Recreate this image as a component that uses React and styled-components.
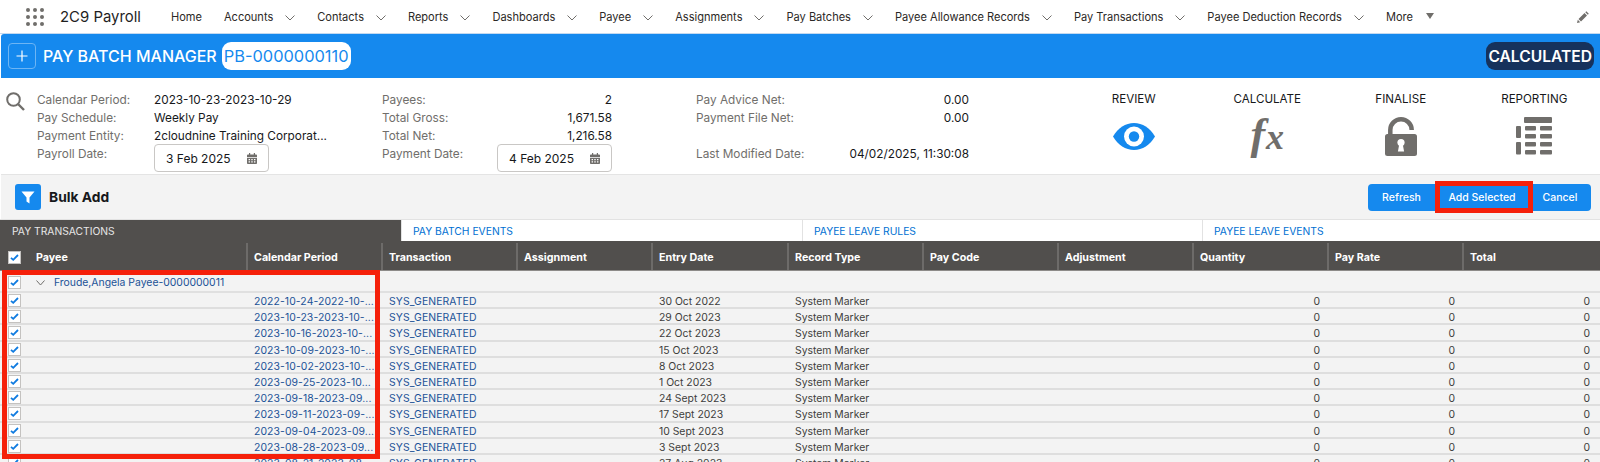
import React from "react";
import styled, { createGlobalStyle } from "styled-components";

const GlobalStyle = createGlobalStyle`
  html, body {
    margin: 0;
    padding: 0;
    height: 462px;
    overflow: hidden;
    background: #ffffff;
    font-family: Inter, "Liberation Sans", sans-serif;
    color: #16181b;
  }
  * { box-sizing: border-box; }
`;

const NavBar = styled.nav`
  height: 34px;
  display: flex;
  align-items: center;
  padding-left: 26px;
  background: #fff;
  border-bottom: 1px solid #c3d9f0;
`;

const AppGrid = styled.div`
  width: 18px;
  height: 18px;
  display: grid;
  grid-template-columns: repeat(3, 4px);
  grid-template-rows: repeat(3, 4px);
  justify-content: space-between;
  align-content: space-between;
  margin-right: 16px;
`;

const AppDot = styled.span`
  border-radius: 50%;
  background: #706e6b;
`;

const AppName = styled.div`
  font-size: 14.9px;
  width: 111px;
  white-space: nowrap;
  color: #1f1f1f;
`;

const NavItem = styled.div`
  display: flex;
  align-items: center;
  font-size: 11.05px;
  color: #2b2826;
  white-space: nowrap;
  margin-right: ${({ $gap }) => $gap}px;
`;

const NavChevron = styled.svg`
  width: 10px;
  height: 6px;
  margin-left: 12px;
  margin-top: 2px;
`;

const NavCaret = styled.span`
  width: 0;
  height: 0;
  margin-left: 13px;
  margin-bottom: 2px;
  border-left: 4.5px solid transparent;
  border-right: 4.5px solid transparent;
  border-top: 6px solid #706e6b;
`;

const PencilWrap = styled.div`
  margin-left: auto;
  margin-right: 11px;
  display: flex;
`;

const HeaderBar = styled.header`
  height: 44px;
  display: flex;
  align-items: center;
  padding: 0 6px 0 7px;
  background: #1589ee;
  border-radius: 3px 0 0 0;
  margin-left: 1px;
`;

const PlusButton = styled.div`
  width: 28px;
  height: 26px;
  display: flex;
  align-items: center;
  justify-content: center;
  margin-right: 7px;
  border: 1px solid #6db5f4;
  border-radius: 4px;
`;

const HeaderTitle = styled.div`
  font-size: 16px;
  font-weight: 500;
  color: #fff;
  margin-right: 5px;
  white-space: nowrap;
`;

const RecordChip = styled.div`
  height: 28px;
  padding: 0 2px;
  display: flex;
  align-items: center;
  border-radius: 9px;
  background: #fff;
  color: #1589ee;
  font-size: 16.4px;
  white-space: nowrap;
`;

const StatusChip = styled.div`
  height: 28px;
  margin-left: auto;
  padding: 0 2px;
  display: flex;
  align-items: center;
  border-radius: 9px;
  background: #16325c;
  color: #fff;
  font-size: 15.6px;
  font-weight: 600;
`;

const InfoPanel = styled.section`
  height: 97px;
  display: flex;
  background: #fff;
  border-bottom: 1px solid #e4e4e4;
  margin-left: 1px;
`;

const SearchSlot = styled.div`
  width: 36px;
  padding: 14px 0 0 5px;
`;

const InfoColumn = styled.div`
  width: ${({ $width }) => $width}px;
  margin-right: ${({ $after }) => $after}px;
  padding-top: 13px;
`;

const InfoRow = styled.div`
  height: ${({ $height }) => $height || 18}px;
  display: flex;
  align-items: ${({ $top }) => ($top ? "flex-start" : "center")};
  justify-content: space-between;
  font-size: 11.8px;
  white-space: nowrap;
`;

const InfoLabel = styled.span`
  color: #706e6b;
  ${({ $top }) => $top && "margin-top: 2px;"}
`;

const InfoValue = styled.span`
  color: #16181b;
  ${({ $left }) => $left && "width: 170px;"}
`;

const DateSlot = styled.div`
  width: ${({ $width }) => $width}px;
`;

const DateBox = styled.div`
  width: 115px;
  height: 28px;
  margin-top: -1px;
  display: flex;
  align-items: center;
  justify-content: space-between;
  padding: 0 11px;
  border: 1px solid #c9c7c5;
  border-radius: 4px;
  background: #fff;
  font-size: 12px;
  color: #16181b;
`;

const ActionList = styled.div`
  margin-left: auto;
  margin-right: -1px;
  display: grid;
  grid-template-columns: repeat(4, 133.5px);
`;

const ActionItem = styled.div`
  display: flex;
  flex-direction: column;
  align-items: center;
  padding-top: 14px;
  font-size: 11.6px;
  color: #16181b;
`;

const ActionIconSlot = styled.div`
  height: 40px;
  margin-top: 10px;
  display: flex;
  align-items: center;
  justify-content: center;
`;

const FxMark = styled.span`
  display: flex;
  align-items: baseline;
  font-family: "Liberation Serif", serif;
  font-style: italic;
  font-weight: 700;
  line-height: 38px;
  color: #706e6b;
`;

const FxLetter = styled.span`
  font-size: ${({ $size }) => $size}px;
  margin-left: ${({ $shift }) => $shift || 0}px;
`;

const Toolbar = styled.div`
  height: 44px;
  display: flex;
  align-items: center;
  padding: 0 9px 0 14px;
  background: #f3f3f3;
  margin-left: 1px;
`;

const FilterTile = styled.div`
  width: 26px;
  height: 26px;
  display: flex;
  align-items: center;
  justify-content: center;
  margin-right: 8px;
  border-radius: 3px;
  background: #1589ee;
`;

const ToolbarTitle = styled.div`
  font-size: 13.8px;
  font-weight: 700;
  color: #16181b;
`;

const ButtonGroup = styled.div`
  position: relative;
  margin-left: auto;
  display: flex;
`;

const ActionButton = styled.button`
  height: 27px;
  padding: 0;
  width: ${({ $width }) => $width}px;
  border: 0;
  background: #1589ee;
  color: #fff;
  font-family: inherit;
  font-size: 10.5px;
  font-weight: 500;
  border-radius: ${({ $round }) =>
    $round === "left" ? "4px 0 0 4px" : $round === "right" ? "0 4px 4px 0" : "0"};
`;

const Callout = styled.div`
  position: absolute;
  border: 5px solid #f5200a;
  pointer-events: none;
  z-index: 5;
  top: ${({ $top }) => $top}px;
  left: ${({ $left }) => $left}px;
  width: ${({ $width }) => $width}px;
  height: ${({ $height }) => $height}px;
`;

const TabStrip = styled.div`
  height: 22px;
  display: flex;
  background: #fff;
  border-top: 1px solid #e2e2e2;
`;

const Tab = styled.div`
  width: ${({ $width }) => $width}px;
  display: flex;
  align-items: center;
  padding-left: ${({ $active }) => ($active ? 12 : 11)}px;
  font-size: 10.3px;
  white-space: nowrap;
  background: ${({ $active }) => ($active ? "#514f4d" : "#fff")};
  color: ${({ $active }) => ($active ? "#e6e6e6" : "#0070d2")};
  border-left: ${({ $active }) => ($active ? "0" : "1px solid #e2e2e2")};
`;

const TableArea = styled.div`
  position: relative;
  background: #f3f3f3;
`;

const gridColumns = "246px 135px 135px 135px 136px 135px 135px 135px 135px 135px 138px";

const HeadRow = styled.div`
  height: 30px;
  display: grid;
  grid-template-columns: ${gridColumns};
  background: #514f4d;
  border-bottom: 1px solid #8d8b89;
`;

const HeadCell = styled.div`
  display: flex;
  align-items: center;
  padding: 1px 0 0 ${({ $first }) => ($first ? 8 : 6)}px;
  margin-top: 2px;
  font-size: 10.7px;
  font-weight: 700;
  color: #fff;
  white-space: nowrap;
  border-left: ${({ $first }) => ($first ? "0" : "2px solid #6d6b69")};
`;

const BoxMark = styled.span`
  flex: none;
  width: 13px;
  height: 13px;
  display: flex;
  align-items: center;
  justify-content: center;
  background: #fff;
  border: 1px solid #c4c2c0;
  margin-right: ${({ $after }) => $after || 0}px;
`;

const GroupRow = styled.div`
  height: 22px;
  display: flex;
  align-items: center;
  padding: 3px 0 0 8px;
  background: #f3f3f3;
  border-bottom: 2px solid #e0e0e0;
  font-size: 10.4px;
  color: #1b5297;
`;

const GroupChevron = styled.svg`
  width: 9px;
  height: 6px;
  margin: 0 9px 0 15px;
`;

const DataRow = styled.div`
  height: 16.2px;
  display: grid;
  grid-template-columns: ${gridColumns};
  border-bottom: 2px solid #dedede;
  font-size: 10.4px;
  line-height: 18px;
  white-space: nowrap;
`;

const CheckCell = styled.div`
  display: flex;
  align-items: flex-start;
  padding: 1px 0 0 8px;
`;

const LinkCell = styled.div`
  padding-left: 8px;
  color: #1b5297;
  letter-spacing: 0.1px;
`;

const TextCell = styled.div`
  padding-left: 8px;
  color: #3e3e3c;
`;

const NumberCell = styled.div`
  text-align: right;
  padding-right: ${({ $last }) => ($last ? 10 : 7)}px;
  color: #3e3e3c;
`;

const nav = [
  ["Home", false],
  ["Accounts", true],
  ["Contacts", true],
  ["Reports", true],
  ["Dashboards", true],
  ["Payee", true],
  ["Assignments", true],
  ["Pay Batches", true],
  ["Payee Allowance Records", true],
  ["Pay Transactions", true],
  ["Payee Deduction Records", true],
];

const rows = [
  ["2022-10-24-2022-10-...", "30 Oct 2022"],
  ["2023-10-23-2023-10-...", "29 Oct 2023"],
  ["2023-10-16-2023-10-...", "22 Oct 2023"],
  ["2023-10-09-2023-10-...", "15 Oct 2023"],
  ["2023-10-02-2023-10-...", "8 Oct 2023"],
  ["2023-09-25-2023-10...", "1 Oct 2023"],
  ["2023-09-18-2023-09...", "24 Sept 2023"],
  ["2023-09-11-2023-09-...", "17 Sept 2023"],
  ["2023-09-04-2023-09...", "10 Sept 2023"],
  ["2023-08-28-2023-09...", "3 Sept 2023"],
  ["2023-08-21-2023-08...", "27 Aug 2023"],
];

const heads = ["Calendar Period", "Transaction", "Assignment", "Entry Date", "Record Type", "Pay Code", "Adjustment", "Quantity", "Pay Rate", "Total"];

const Chevron = () => (
  <NavChevron viewBox="0 0 10 6">
    <path d="M0.5 0.5 L5 5 L9.5 0.5" fill="none" stroke="#706e6b" strokeWidth="1" />
  </NavChevron>
);

const Check = () => (
  <svg width="9" height="7" viewBox="0 0 9 7">
    <path d="M1 3.8 L3.2 5.8 L8 1" fill="none" stroke="#0f7be0" strokeWidth="1.8" />
  </svg>
);

const CalendarIcon = () => (
  <svg width="10" height="11" viewBox="0 0 10 11">
    <path d="M2 0h1.2v1.4H6.8V0H8v1.4h1.2c.4 0 .8.4.8.8V4H0V2.2c0-.4.4-.8.8-.8H2z" fill="#706e6b" />
    <path d="M0 4.8h10v5.4c0 .4-.4.8-.8.8H.8c-.4 0-.8-.4-.8-.8z" fill="#706e6b" />
    <path d="M1.6 6h1.4v1.2H1.6zM4.3 6h1.4v1.2H4.3zM7 6h1.4v1.2H7zM1.6 8.2h1.4v1.2H1.6zM4.3 8.2h1.4v1.2H4.3zM7 8.2h1.4v1.2H7z" fill="#fff" />
  </svg>
);

const EyeIcon = () => (
  <svg width="42" height="27" viewBox="0 0 42 27">
    <path d="M0 13.5C5 5 12.5 0 21 0s16 5 21 13.5C37 22 29.5 27 21 27S5 22 0 13.5z" fill="#1589ee" />
    <circle cx="21" cy="13.5" r="10" fill="#fff" />
    <circle cx="21" cy="13.5" r="5.2" fill="#1589ee" />
  </svg>
);

const LockIcon = () => (
  <svg width="32" height="39" viewBox="0 0 32 39">
    <path d="M5.3 18V13A10.7 10.7 0 0 1 26.7 13" fill="none" stroke="#706e6b" strokeWidth="4.5" />
    <rect x="0" y="17" width="32" height="22" rx="2.5" fill="#706e6b" />
    <circle cx="16" cy="25.5" r="3.6" fill="#fff" />
    <path d="M14.5 26h3l1.6 8.5h-6.2z" fill="#fff" />
  </svg>
);

const ListIcon = () => (
  <svg width="36" height="38" viewBox="0 0 36 38" fill="#706e6b">
    <rect x="8" y="0" width="28" height="6" rx="1" />
    <rect x="0" y="9" width="5" height="12" rx="1" />
    <rect x="0" y="25" width="5" height="12.5" rx="1" />
    {[9, 17, 25, 33].map((y) => (
      <g key={y}>
        <rect x="9" y={y} width="11" height="4.5" rx="1" />
        <rect x="24" y={y} width="12" height="4.5" rx="1" />
      </g>
    ))}
  </svg>
);

export default function App() {
  return (
    <>
      <GlobalStyle />
      <NavBar>
        <AppGrid>
          {Array.from({ length: 9 }).map((_, i) => (
            <AppDot key={i} />
          ))}
        </AppGrid>
        <AppName>2C9 Payroll</AppName>
        {nav.map(([label, hasMenu]) => (
          <NavItem key={label} $gap={22}>
            {label}
            {hasMenu && <Chevron />}
          </NavItem>
        ))}
        <NavItem $gap={0}>
          More
          <NavCaret />
        </NavItem>
        <PencilWrap>
          <svg width="12" height="12" viewBox="0 0 12 12">
            <path d="M0 12 L0.8 8.8 L3.2 11.2z M1.5 8 L7.5 2 L10 4.5 L4 10.5z M8.3 1.2 L9.3 0.2 L11.8 2.7 L10.8 3.7z" fill="#706e6b" />
          </svg>
        </PencilWrap>
      </NavBar>

      <HeaderBar>
        <PlusButton>
          <svg width="12" height="12" viewBox="0 0 12 12">
            <path d="M6 0.5V11.5M0.5 6H11.5" stroke="#fff" strokeWidth="1.2" />
          </svg>
        </PlusButton>
        <HeaderTitle>PAY BATCH MANAGER</HeaderTitle>
        <RecordChip>PB-0000000110</RecordChip>
        <StatusChip>CALCULATED</StatusChip>
      </HeaderBar>

      <InfoPanel>
        <SearchSlot>
          <svg width="19" height="19" viewBox="0 0 19 19">
            <circle cx="7.5" cy="7.5" r="6.3" fill="none" stroke="#706e6b" strokeWidth="2" />
            <path d="M12 12 L18 18" stroke="#706e6b" strokeWidth="2.4" />
          </svg>
        </SearchSlot>
        <InfoColumn $width={287} $after={58}>
          <InfoRow>
            <InfoLabel>Calendar Period:</InfoLabel>
            <InfoValue $left>2023-10-23-2023-10-29</InfoValue>
          </InfoRow>
          <InfoRow>
            <InfoLabel>Pay Schedule:</InfoLabel>
            <InfoValue $left>Weekly Pay</InfoValue>
          </InfoRow>
          <InfoRow>
            <InfoLabel>Payment Entity:</InfoLabel>
            <InfoValue $left>2cloudnine Training Corporat...</InfoValue>
          </InfoRow>
          <InfoRow $top $height={30}>
            <InfoLabel $top>Payroll Date:</InfoLabel>
            <DateSlot $width={170}>
              <DateBox>
                3 Feb 2025
                <CalendarIcon />
              </DateBox>
            </DateSlot>
          </InfoRow>
        </InfoColumn>
        <InfoColumn $width={230} $after={84}>
          <InfoRow>
            <InfoLabel>Payees:</InfoLabel>
            <InfoValue>2</InfoValue>
          </InfoRow>
          <InfoRow>
            <InfoLabel>Total Gross:</InfoLabel>
            <InfoValue>1,671.58</InfoValue>
          </InfoRow>
          <InfoRow>
            <InfoLabel>Total Net:</InfoLabel>
            <InfoValue>1,216.58</InfoValue>
          </InfoRow>
          <InfoRow $top $height={30}>
            <InfoLabel $top>Payment Date:</InfoLabel>
            <DateSlot $width={115}>
              <DateBox>
                4 Feb 2025
                <CalendarIcon />
              </DateBox>
            </DateSlot>
          </InfoRow>
        </InfoColumn>
        <InfoColumn $width={273} $after={0}>
          <InfoRow>
            <InfoLabel>Pay Advice Net:</InfoLabel>
            <InfoValue>0.00</InfoValue>
          </InfoRow>
          <InfoRow>
            <InfoLabel>Payment File Net:</InfoLabel>
            <InfoValue>0.00</InfoValue>
          </InfoRow>
          <InfoRow />
          <InfoRow>
            <InfoLabel>Last Modified Date:</InfoLabel>
            <InfoValue>04/02/2025, 11:30:08</InfoValue>
          </InfoRow>
        </InfoColumn>
        <ActionList>
          <ActionItem>
            REVIEW
            <ActionIconSlot>
              <EyeIcon />
            </ActionIconSlot>
          </ActionItem>
          <ActionItem>
            CALCULATE
            <ActionIconSlot>
              <FxMark>
                <FxLetter $size={44}>f</FxLetter>
                <FxLetter $size={36} $shift={1}>x</FxLetter>
              </FxMark>
            </ActionIconSlot>
          </ActionItem>
          <ActionItem>
            FINALISE
            <ActionIconSlot>
              <LockIcon />
            </ActionIconSlot>
          </ActionItem>
          <ActionItem>
            REPORTING
            <ActionIconSlot>
              <ListIcon />
            </ActionIconSlot>
          </ActionItem>
        </ActionList>
      </InfoPanel>

      <Toolbar>
        <FilterTile>
          <svg width="14" height="13" viewBox="0 0 14 13">
            <path d="M0.5 0.5H13.5L8.5 6.5V12.5L5.5 10.5V6.5z" fill="#fff" />
          </svg>
        </FilterTile>
        <ToolbarTitle>Bulk Add</ToolbarTitle>
        <ButtonGroup>
          <ActionButton $width={67} $round="left">Refresh</ActionButton>
          <ActionButton $width={94}>Add Selected</ActionButton>
          <ActionButton $width={62} $round="right">Cancel</ActionButton>
          <Callout $top={-3} $left={67} $width={98} $height={32} />
        </ButtonGroup>
      </Toolbar>

      <TabStrip>
        <Tab $active $width={401}>PAY TRANSACTIONS</Tab>
        <Tab $width={401}>PAY BATCH EVENTS</Tab>
        <Tab $width={400}>PAYEE LEAVE RULES</Tab>
        <Tab $width={398}>PAYEE LEAVE EVENTS</Tab>
      </TabStrip>

      <TableArea>
        <HeadRow>
          <HeadCell $first>
            <BoxMark $after={15}><Check /></BoxMark>
            Payee
          </HeadCell>
          {heads.map((h) => (
            <HeadCell key={h}>{h}</HeadCell>
          ))}
        </HeadRow>
        <GroupRow>
          <BoxMark><Check /></BoxMark>
          <GroupChevron viewBox="0 0 9 6">
            <path d="M0.5 0.5 L4.5 5 L8.5 0.5" fill="none" stroke="#706e6b" strokeWidth="1" />
          </GroupChevron>
          Froude,Angela Payee-0000000011
        </GroupRow>
        {rows.map(([period, date]) => (
          <DataRow key={period}>
            <CheckCell>
              <BoxMark><Check /></BoxMark>
            </CheckCell>
            <LinkCell>{period}</LinkCell>
            <LinkCell>SYS_GENERATED</LinkCell>
            <TextCell />
            <TextCell>{date}</TextCell>
            <TextCell>System Marker</TextCell>
            <TextCell />
            <TextCell />
            <NumberCell>0</NumberCell>
            <NumberCell>0</NumberCell>
            <NumberCell $last>0</NumberCell>
          </DataRow>
        ))}
        <Callout $top={29} $left={2} $width={378} $height={189} />
      </TableArea>
    </>
  );
}
